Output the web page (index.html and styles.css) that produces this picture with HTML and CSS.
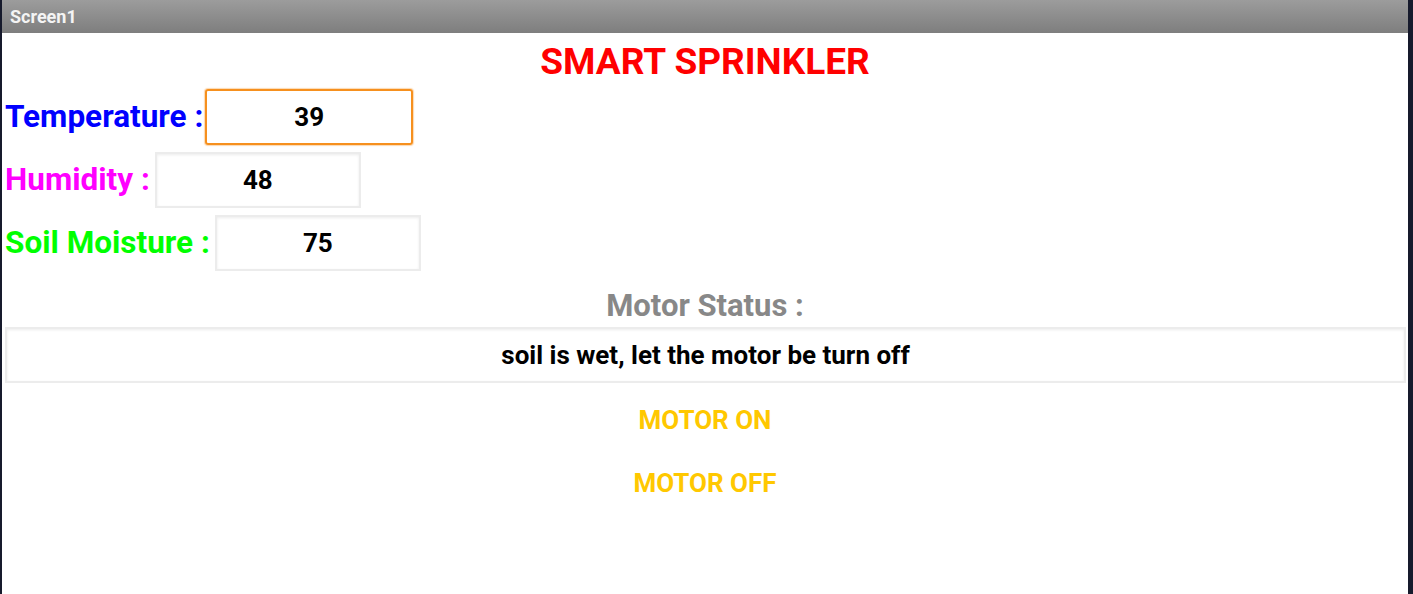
FILE: index.html
```html
<!DOCTYPE html>
<html>
<head>
<meta charset="utf-8">
<link rel="stylesheet" href="styles.css">
</head>
<body>
<div class="frame">
  <div class="titlebar">Screen1</div>
  <div class="screen">
    <div class="title">SMART SPRINKLER</div>
    <div class="row">
      <span class="label blue">Temperature :</span>
      <div class="box focus">39</div>
    </div>
    <div class="row">
      <span class="label magenta">Humidity :</span>
      <div class="box">48</div>
    </div>
    <div class="row">
      <span class="label green">Soil Moisture :</span>
      <div class="box">75</div>
    </div>
    <div class="status-label">Motor Status :</div>
    <div class="status-box">soil is wet, let the motor be turn off</div>
    <div class="btn on">MOTOR ON</div>
    <div class="btn off">MOTOR OFF</div>
  </div>
</div>
</body>
</html>
```
FILE: styles.css
```css
html, body {
  margin: 0;
  padding: 0;
  background: #161a2c;
  height: 100%;
}
.frame {
  width: 1406px;
  margin-left: 2px;
  height: 594px;
  background: #fff;
  display: flex;
  flex-direction: column;
  font-family: Roboto, "Liberation Sans", sans-serif;
}
.titlebar {
  height: 33px;
  background: linear-gradient(#9c9c9c, #7e7e7e);
  color: #f4f4f4;
  font-weight: bold;
  font-size: 18px;
  line-height: 34px;
  padding-left: 8px;
  flex: none;
}
.screen {
  flex: 1;
  display: flex;
  flex-direction: column;
  background: #fff;
}
.title {
  text-align: center;
  color: #ff0000;
  font-weight: bold;
  font-size: 37px;
  line-height: 40px;
  margin-top: 9px;
  margin-bottom: 3px;
}
.row {
  display: flex;
  align-items: center;
  height: 63px;
  padding-left: 3px;
}
.label {
  font-weight: bold;
  font-size: 31.5px;
  margin-right: 5px;
}
.blue { color: #0000ff; margin-right: 2px; }
.magenta { color: #ff00ff; }
.green { color: #00ff00; }
.box {
  box-sizing: border-box;
  width: 206px;
  height: 56px;
  border: 2px solid #ececec;
  box-shadow: inset 0 1px 3px rgba(0,0,0,0.08);
  display: flex;
  align-items: center;
  justify-content: center;
  font-weight: bold;
  font-size: 26px;
  color: #000;
}
.box.focus {
  width: 208px;
  border: 2px solid #f6901e;
  border-radius: 3px;
  box-shadow: 0 0 1px 1px rgba(246,144,30,0.35);
}
.status-label {
  margin-top: 14px;
  text-align: center;
  color: #888888;
  font-weight: bold;
  font-size: 31px;
  line-height: 36px;
}
.status-box {
  box-sizing: border-box;
  margin: 3px 2px 0 3px;
  height: 56px;
  border: 2px solid #ececec;
  box-shadow: inset 0 1px 3px rgba(0,0,0,0.08);
  display: flex;
  align-items: center;
  justify-content: center;
  font-weight: bold;
  font-size: 26px;
  color: #000;
}
.btn {
  text-align: center;
  color: #ffc800;
  font-weight: bold;
  font-size: 26px;
  line-height: 63px;
}
.btn.on { margin-top: 6px; }
```
